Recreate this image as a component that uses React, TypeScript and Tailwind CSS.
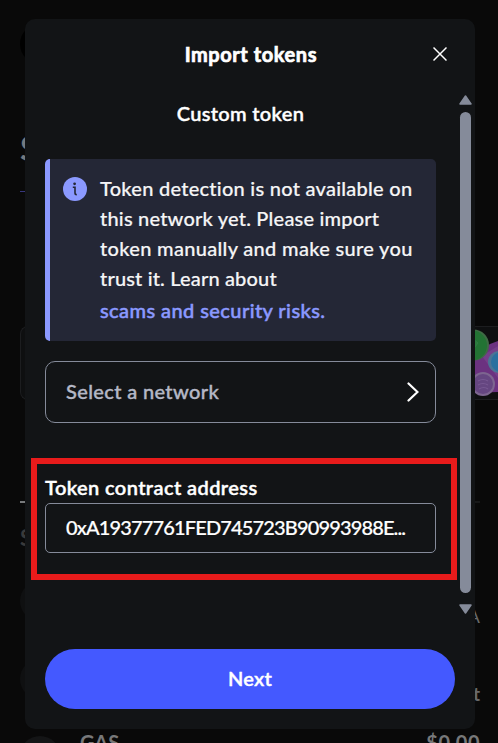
import React from "react";

const FONT = "font-['Lato','Open_Sans',sans-serif]";

function Coins() {
  return (
    <svg className="h-[72px] w-7 shrink-0" viewBox="0 1 28 72">
      <path d="M0 32L20 18L28 15V66L0 67Z" fill="#6b3280" />
      <path d="M12 30L28 20V52Z" fill="#74408a" />
      <circle cx="3.5" cy="19" r="15.5" fill="#3f6b45" />
      <circle cx="2" cy="19.5" r="15" fill="#237334" />
      <path d="M1 11l7 6-6 8zM2 11v14" fill="#2b7b3c" stroke="#35804a" strokeWidth="0.7" />
      <circle cx="29" cy="36" r="11" fill="#4b7494" />
      <circle cx="31" cy="36" r="10" fill="#29709f" />
      <circle cx="13" cy="58" r="12" fill="#7d6590" />
      <circle cx="13" cy="58" r="10" fill="#654681" />
      <path d="M8 55q5-3 10 0M8 59q5-3 10 0M9 63q5-3 9 0" fill="none" stroke="#775892" strokeWidth="1.2" />
    </svg>
  );
}

function Backdrop() {
  return (
    <div className="absolute inset-0 flex flex-col overflow-hidden bg-[#090909] pl-5 pr-[18px] pt-6 text-[#68696b]">
      <div className="h-10 w-10 shrink-0 rounded-full bg-black" />
      <p className="mt-16 h-10 shrink-0 text-[34px] font-bold leading-10 text-[#747a80]">S</p>
      <div className="mt-[23px] h-px w-6 shrink-0 bg-[#37377d]" />
      <div className="-mr-[18px] mt-[134px] flex h-[74px] shrink-0 justify-end rounded-l-lg border border-r-0 border-[#1c1d1f] bg-[#0e0f10]">
        <div className="w-7">
          <Coins />
        </div>
      </div>
      <div className="mt-[101px] flex h-0.5 shrink-0">
        <div className="w-20 bg-[#77797b]" />
        <div className="grow bg-[#171819]" />
      </div>
      <p className="mt-[21px] h-7 shrink-0 text-[22px] font-bold leading-7 text-[#393a3b]">S</p>
      <div className="mt-[19px] flex h-[60px] shrink-0 items-center justify-between">
        <div className="h-10 w-10 rounded-full bg-[#0f1011]" />
        <span className="self-end text-[18px] leading-[30px]">A</span>
      </div>
      <div className="mt-[18px] flex h-[60px] shrink-0 items-center justify-between">
        <div className="h-10 w-10 rounded-full bg-[#0f1011]" />
        <span className="self-end text-[19px] font-bold leading-[30px]">t</span>
      </div>
      <div className="mt-[17px] flex h-[60px] shrink-0 items-center gap-5 text-[20px] font-bold leading-[30px] text-[#777879]">
        <div className="h-10 w-10 rounded-full bg-[#141516]" />
        <span className="grow self-start pt-px text-[20px]">GAS</span>
        <span className="self-start pt-px tracking-[0.5px]">$0.00</span>
      </div>
    </div>
  );
}

function InfoIcon() {
  return (
    <svg className="mt-[18px] h-6 w-6 shrink-0" viewBox="0 0 24 24">
      <circle cx="12" cy="12" r="12" fill="#8b99ff" />
      <circle cx="11.6" cy="6.8" r="1.4" fill="#242736" />
      <path d="M9.8 10.2H12v5.7q0 1.7 1.8 1.7" fill="none" stroke="#242736" strokeWidth="1.6" />
    </svg>
  );
}

function ScrollBar() {
  return (
    <div className="flex w-[13px] shrink-0 flex-col items-center pt-1.5">
      <svg className="h-[10px] w-[13px]" viewBox="0 0 13 10">
        <path d="M6.5 1L12 9H1Z" fill="#858b9a" stroke="#858b9a" strokeWidth="1.5" strokeLinejoin="round" />
      </svg>
      <div className="mt-[7px] h-[481px] w-[11px] rounded-full bg-[#858b9a]" />
      <svg className="mt-[11px] h-[10px] w-[13px]" viewBox="0 0 13 10">
        <path d="M6.5 9L12 1H1Z" fill="#858b9a" stroke="#858b9a" strokeWidth="1.5" strokeLinejoin="round" />
      </svg>
    </div>
  );
}

export default function App() {
  return (
    <main className={`relative h-[743px] w-[498px] overflow-hidden ${FONT}`}>
      <Backdrop />
      <section className="absolute left-[25px] top-[19px] flex h-[710px] w-[450px] flex-col rounded-[10px] bg-[#121416] text-white">
        <header className="flex h-[70px] shrink-0 items-center justify-end pr-7">
          <h1 className="mr-[116px] text-[20px] font-bold leading-6 tracking-[0.57px] [-webkit-text-stroke:0.7px_white]">Import tokens</h1>
          <svg className="h-4 w-[14px] shrink-0" viewBox="0 0 14 16">
            <path d="M.5 1.5L13.5 14.5M13.5 1.5L.5 14.5" stroke="white" strokeWidth="1.5" />
          </svg>
        </header>
        <div className="flex h-[530px] shrink-0 justify-between pl-5 pr-[3px]">
          <div className="w-[391px]">
            <h2 className="flex h-[51px] items-center justify-center pb-[3px] text-[20px] font-semibold tracking-[0.3px] [-webkit-text-stroke:0.35px_white]">
              Custom token
            </h2>
            <div className="mt-[19px] flex h-[182px] rounded-[5px] border-l-[5px] border-[#8b99ff] bg-[#242736] pl-[13px]">
              <InfoIcon />
              <div className="ml-[13px] mt-[14px] whitespace-nowrap text-[20px] font-medium leading-[30px] text-[#f5f5f6] [-webkit-text-stroke:0.2px_currentColor]">
                <p className="tracking-[0.26px]">Token detection is not available on</p>
                <p className="tracking-[0.2px]">this network yet. Please import</p>
                <p className="tracking-[0.32px]">token manually and make sure you</p>
                <p className="tracking-[0.16px]">trust it. Learn about</p>
                <p className="mt-0.5 tracking-[0.42px] text-[#8b99ff] [-webkit-text-stroke:0.5px_currentColor]">
                  scams and security risks.
                </p>
              </div>
            </div>
            <button className="mt-5 flex h-[62px] w-full items-center justify-between rounded-[10px] border border-[#858b9a] pl-5 pr-4 text-[20px] font-medium text-[#b5b8c6]">
              <span className="pb-0.5 tracking-[0.36px] [-webkit-text-stroke:0.4px_currentColor]">Select a network</span>
              <svg className="h-5 w-3" viewBox="0 0 12 20">
                <path d="M1.5 1.5L10.5 10L1.5 18.5" fill="none" stroke="white" strokeWidth="2.2" strokeLinecap="round" />
              </svg>
            </button>
            <div className="-ml-[14px] mt-[35px] h-[122px] w-[426px] border-[6px] border-[#e81b1b] pl-2 pt-2">
              <label className="block whitespace-nowrap text-[20px] font-semibold leading-[30px] tracking-[0.4px] [-webkit-text-stroke:0.4px_white]">
                Token contract address
              </label>
              <div className="mt-px flex h-[50px] w-[391px] items-center whitespace-nowrap rounded-[5px] border border-[#858b9a] pb-0.5 pl-5 text-[20px] font-medium tracking-[-0.85px] [-webkit-text-stroke:0.2px_white]">
                0xA19377761FED745723B90993988E...
              </div>
            </div>
          </div>
          <ScrollBar />
        </div>
        <button className="mx-5 mt-[30px] flex h-[60px] items-center justify-center rounded-full bg-[#4459ff] pb-0.5 text-[20px] font-semibold tracking-[0.2px] [-webkit-text-stroke:0.4px_white]">
          Next
        </button>
      </section>
    </main>
  );
}
